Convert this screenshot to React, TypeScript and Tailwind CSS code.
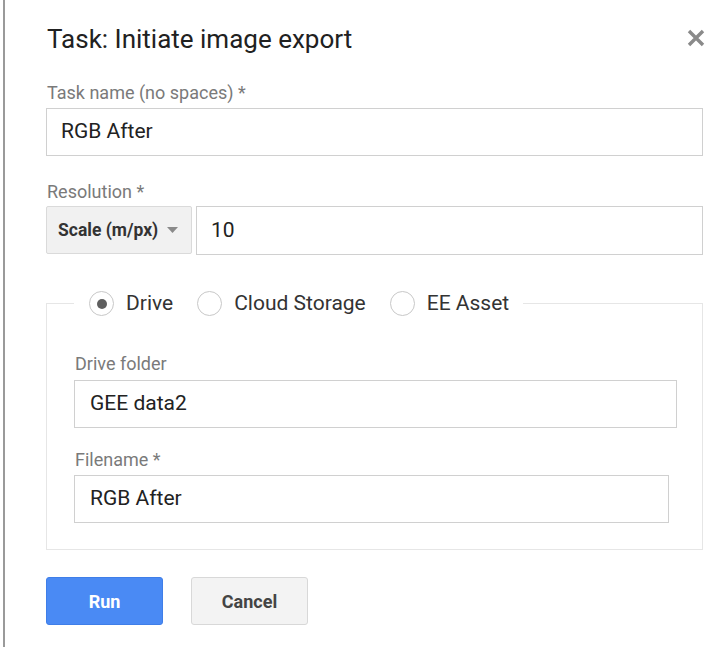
import React from "react";

function Radio({ checked, label }: { checked?: boolean; label: string }) {
  return (
    <span className="flex items-center">
      <span className="w-[25px] h-[25px] rounded-full border-[1.5px] border-[#c8c8c8] bg-white flex items-center justify-center">
        {checked && <span className="w-[10px] h-[10px] rounded-full bg-[#5f5f5f]" />}
      </span>
      <span className="ml-[12px] text-[21px] leading-[25px] text-[#333]">{label}</span>
    </span>
  );
}

export default function App() {
  return (
    <div
      className="relative w-[721px] h-[647px] bg-white overflow-hidden"
      style={{ fontFamily: "Roboto, 'Noto Sans', Arial, sans-serif" }}
    >
      <div className="absolute left-[3px] top-0 bottom-0 w-[1.5px] bg-[#9a9a9a]" />
      <button className="absolute left-[686px] top-[28px] w-[20px] h-[20px] flex items-center justify-center">
        <svg width="18" height="18" viewBox="0 0 18 18">
          <path d="M2 2 L16 16 M16 2 L2 16" stroke="#8a8a8a" strokeWidth="3.4" strokeLinecap="butt" />
        </svg>
      </button>
      <div className="pl-[46px] pr-[18px] pt-[23px]">
        <h1 className="text-[26px] leading-[32px] text-[#212121] pl-[1px]">Task: Initiate image export</h1>

        <div className="mt-[27px] text-[18px] leading-[22px] text-[#7a7a7a] pl-[1px]">Task name (no spaces) *</div>
        <div className="mt-[4px] h-[48px] border border-[#d0d0d0] flex items-center pl-[14px] text-[21px] text-[#222]">
          RGB After
        </div>

        <div className="mt-[25px] text-[18px] leading-[22px] text-[#7a7a7a] pl-[1px]">Resolution *</div>
        <div className="mt-[3px] flex gap-[4px]">
          <div className="w-[146px] h-[48px] bg-[#f1f1f1] border border-[#dadada] rounded-[2px] flex items-center pl-[11px] text-[17.5px] font-bold text-[#333] whitespace-nowrap">
            Scale (m/px)
            <svg className="ml-[9px] shrink-0" width="11" height="6" viewBox="0 0 11 6">
              <path d="M0 0 L11 0 L5.5 6 Z" fill="#8a8a8a" />
            </svg>
          </div>
          <div className="flex-1 h-[49px] border border-[#d0d0d0] flex items-center pl-[14px] text-[21px] text-[#222]">
            10
          </div>
        </div>

        <fieldset className="mt-[36px] border border-[#e6e6e6] h-[259px] pl-[27px] pr-[0px]">
          <legend className="pl-[15px] pr-[14px]">
            <div className="flex items-center gap-[24px]">
              <Radio checked label="Drive" />
              <Radio label="Cloud Storage" />
              <Radio label="EE Asset" />
            </div>
          </legend>
          <div className="mt-[37px] text-[18px] leading-[22px] text-[#7a7a7a] pl-[1px]">Drive folder</div>
          <div className="mt-[5px] w-[603px] h-[48px] border border-[#d0d0d0] flex items-center pl-[15px] text-[21px] text-[#222]">
            GEE data2
          </div>
          <div className="mt-[21px] text-[18px] leading-[22px] text-[#7a7a7a] pl-[1px]">Filename *</div>
          <div className="mt-[4px] w-[595px] h-[48px] border border-[#d0d0d0] flex items-center pl-[15px] text-[21px] text-[#222]">
            RGB After
          </div>
        </fieldset>

        <div className="mt-[27px] flex gap-[28px]">
          <button className="w-[117px] h-[48px] rounded-[3px] bg-[#4a8af4] border border-[#3f7ee8] text-white font-bold text-[18px]">
            Run
          </button>
          <button className="w-[117px] h-[48px] rounded-[3px] bg-[#f3f3f3] border border-[#d8d8d8] text-[#444] font-bold text-[18px]">
            Cancel
          </button>
        </div>
      </div>
    </div>
  );
}
